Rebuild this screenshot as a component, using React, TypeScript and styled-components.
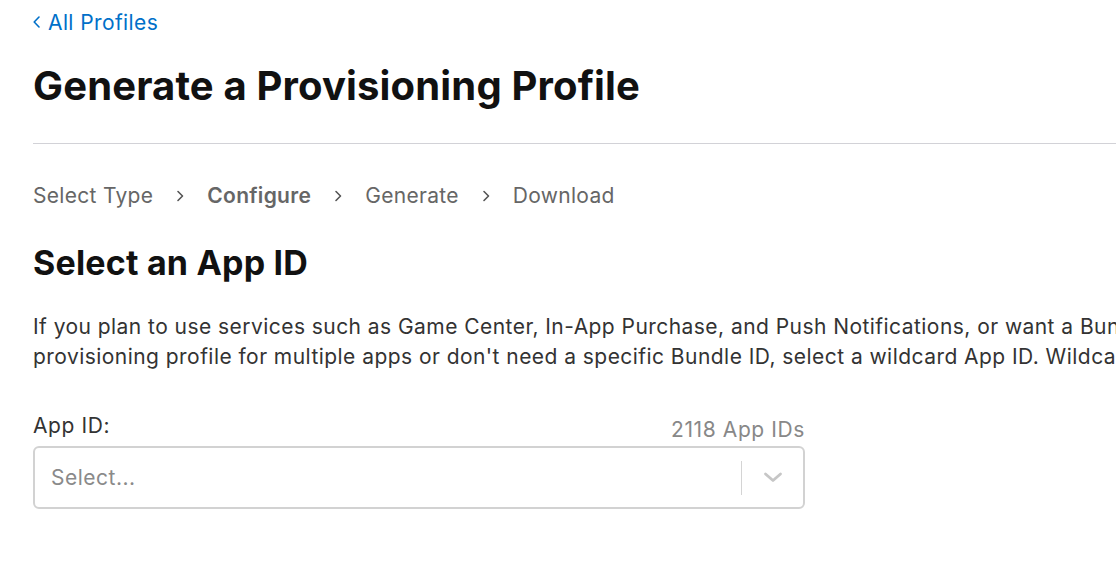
import styled, { createGlobalStyle } from 'styled-components';

const GlobalStyle = createGlobalStyle`
  html, body {
    margin: 0;
    padding: 0;
    background: #fff;
    overflow: hidden;
  }
  body {
    font-family: Inter, "Noto Sans", sans-serif;
    color: #111;
  }
`;

const Page = styled.div`
  width: 1300px;
  padding: 0 0 0 33px;
  box-sizing: border-box;
`;

const BackLink = styled.a`
  display: flex;
  align-items: center;
  gap: 8px;
  height: 44px;
  font-size: 21px;
  letter-spacing: 0.4px;
  color: #0070c9;
  text-decoration: none;
`;

const Title = styled.h1`
  margin: 19px 0 0;
  font-size: 40px;
  font-weight: 700;
  line-height: 46px;
  letter-spacing: 0.15px;
  color: #111;
`;

const Divider = styled.hr`
  margin: 34px 0 0;
  border: none;
  border-top: 1px solid #d2d2d7;
`;

const Steps = styled.nav`
  display: flex;
  align-items: center;
  gap: 22px;
  margin-top: 38px;
  font-size: 21px;
  line-height: 28px;
  letter-spacing: 0.3px;
  color: #666;
`;

const Step = styled.span<{ active?: boolean }>`
  font-weight: ${(p) => (p.active ? 600 : 400)};
`;

const Subtitle = styled.h2`
  margin: 33px 0 0;
  font-size: 34px;
  font-weight: 700;
  line-height: 40px;
  letter-spacing: 0.2px;
  color: #111;
`;

const Paragraph = styled.p`
  margin: 29px 0 0;
  font-size: 21px;
  line-height: 30px;
  letter-spacing: 0.45px;
  color: #333;
  white-space: nowrap;
`;

const Field = styled.div`
  width: 772px;
  margin-top: 41px;
`;

const FieldHead = styled.div`
  display: flex;
  justify-content: space-between;
  align-items: flex-end;
  font-size: 21px;
  line-height: 26px;
  letter-spacing: 0.6px;
`;

const Label = styled.label`
  color: #333;
`;

const Count = styled.span`
  color: #888;
  transform: translateY(4px);
`;

const SelectBox = styled.div`
  display: flex;
  align-items: center;
  height: 63px;
  margin-top: 7px;
  border: 2px solid #d2d2d2;
  border-radius: 6px;
  box-sizing: border-box;
`;

const Placeholder = styled.span`
  flex: 1;
  padding-left: 16px;
  font-size: 21px;
  letter-spacing: 0.5px;
  color: #8a8a8a;
`;

const Separator = styled.span`
  width: 1px;
  height: 34px;
  background: #d4d4d4;
`;

const Arrow = styled.span`
  display: flex;
  align-items: center;
  justify-content: center;
  width: 61px;
`;

function BackChevron() {
  return (
    <svg width="7" height="12" viewBox="0 0 7 12" fill="none">
      <path d="M6 1 L1.2 6 L6 11" stroke="#0070c9" strokeWidth="1.6" strokeLinecap="round" strokeLinejoin="round" />
    </svg>
  );
}

function StepChevron() {
  return (
    <svg width="10" height="14" viewBox="0 0 10 14" fill="none">
      <path d="M3 2.5 L7.5 7 L3 11.5" stroke="#555" strokeWidth="1.6" strokeLinecap="round" strokeLinejoin="round" />
    </svg>
  );
}

function DownChevron() {
  return (
    <svg width="20" height="11" viewBox="0 0 20 11" fill="none">
      <path d="M2.5 2 L10 8.5 L17.5 2" stroke="#c6c6c6" strokeWidth="2.8" strokeLinecap="round" strokeLinejoin="round" />
    </svg>
  );
}

export default function App() {
  return (
    <>
      <GlobalStyle />
      <Page>
        <BackLink href="#">
          <BackChevron />
          All Profiles
        </BackLink>
        <Title>Generate a Provisioning Profile</Title>
        <Divider />
        <Steps>
          <Step>Select Type</Step>
          <StepChevron />
          <Step active>Configure</Step>
          <StepChevron />
          <Step>Generate</Step>
          <StepChevron />
          <Step>Download</Step>
        </Steps>
        <Subtitle>Select an App ID</Subtitle>
        <Paragraph>
          If you plan to use services such as Game Center, In-App Purchase, and Push Notifications, or want a Bundle ID unique to a single app, use an explicit App ID. If you want to create one
          <br />
          provisioning profile for multiple apps or don't need a specific Bundle ID, select a wildcard App ID. Wildcard App IDs use an asterisk (*) as the last digit in the Bundle ID field.
        </Paragraph>
        <Field>
          <FieldHead>
            <Label>App ID:</Label>
            <Count>2118 App IDs</Count>
          </FieldHead>
          <SelectBox>
            <Placeholder>Select...</Placeholder>
            <Separator />
            <Arrow>
              <DownChevron />
            </Arrow>
          </SelectBox>
        </Field>
      </Page>
    </>
  );
}
